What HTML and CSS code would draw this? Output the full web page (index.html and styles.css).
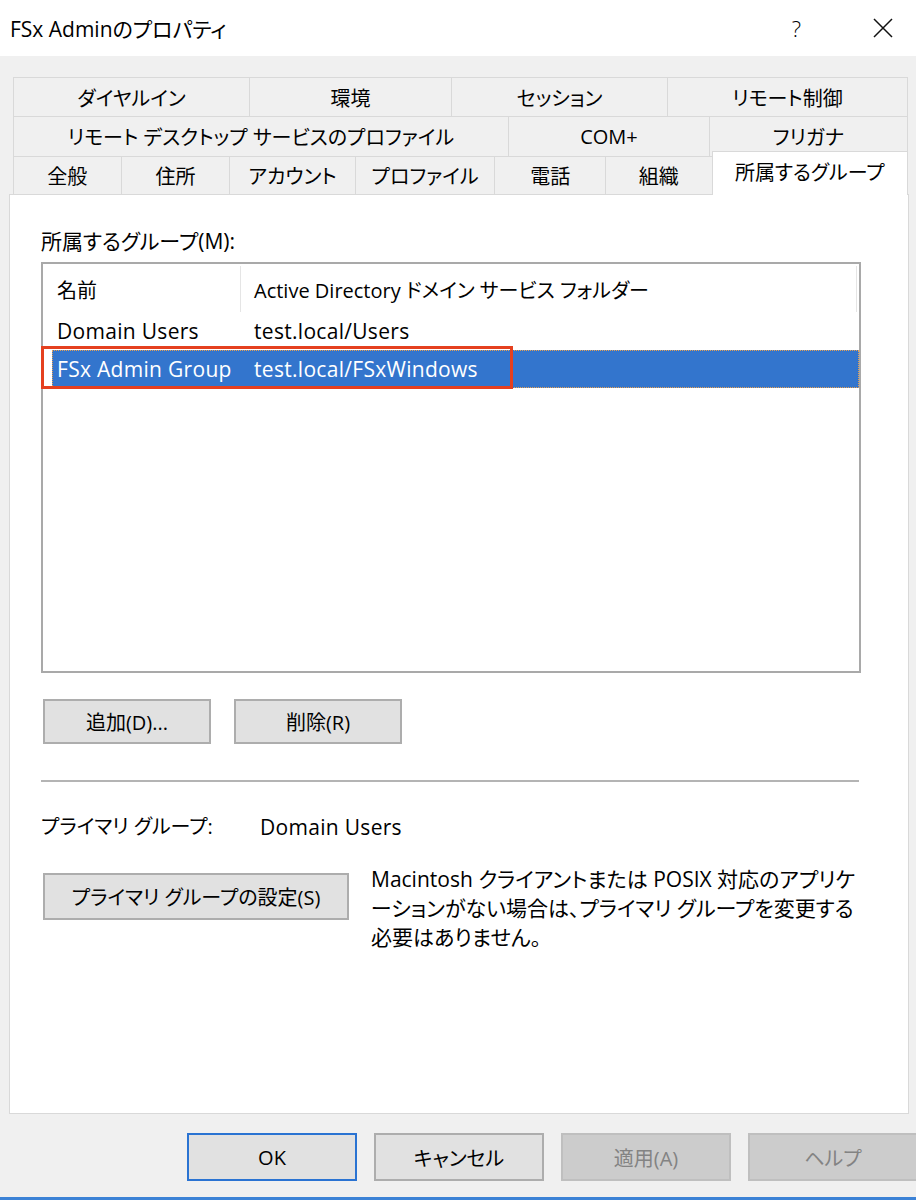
FILE: index.html
```html
<!DOCTYPE html>
<html lang="ja">
<head>
  <meta charset="UTF-8">
  <title>FSx Adminのプロパティ</title>
  <link rel="stylesheet" href="styles.css">
</head>
<body>

  <!-- Barra de título -->
  <div class="titlebar">
    <span class="title">FSx Adminのプロパティ</span>
    <span class="help">?</span>
    <span class="close">
      <svg width="20" height="20" viewBox="0 0 20 20"><path d="M1 1L19 19M19 1L1 19" stroke="#111" stroke-width="1.5" fill="none"/></svg>
    </span>
  </div>

  <!-- Abas em três linhas -->
  <div class="tabs">
    <div class="tab-row row1">
      <div class="tab" style="width:237px">ダイヤルイン</div>
      <div class="tab" style="width:203px">環境</div>
      <div class="tab" style="width:217px">セッション</div>
      <div class="tab" style="width:241px">リモート制御</div>
    </div>
    <div class="tab-row row2">
      <div class="tab" style="width:496px">リモート デスクトップ サービスのプロファイル</div>
      <div class="tab" style="width:202px">COM+</div>
      <div class="tab" style="width:199px">フリガナ</div>
    </div>
    <div class="tab-row row3">
      <div class="tab" style="width:109px">全般</div>
      <div class="tab" style="width:110px">住所</div>
      <div class="tab" style="width:127px">アカウント</div>
      <div class="tab" style="width:141px">プロファイル</div>
      <div class="tab" style="width:112px">電話</div>
      <div class="tab" style="width:108px">組織</div>
      <div class="tab ativa" style="width:197px">所属するグループ</div>
    </div>
  </div>

  <!-- Painel da aba selecionada -->
  <div class="painel">
    <div class="rotulo">所属するグループ(M):</div>

    <div class="lista">
      <div class="linha cabecalho">
        <div class="col1">名前</div>
        <div class="col2">Active Directory ドメイン サービス フォルダー</div>
      </div>
      <div class="linha">
        <div class="col1">Domain Users</div>
        <div class="col2">test.local/Users</div>
      </div>
      <div class="linha selecionada">
        <div class="col1">FSx Admin Group</div>
        <div class="col2">test.local/FSxWindows</div>
        <div class="destaque"></div>
      </div>
    </div>

    <div class="botoes-lista">
      <button class="btn">追加(D)...</button>
      <button class="btn">削除(R)</button>
    </div>

    <div class="separador"></div>

    <div class="primaria">
      <span class="primaria-rotulo">プライマリ グループ:</span>
      <span class="primaria-valor">Domain Users</span>
    </div>

    <div class="primaria-config">
      <button class="btn btn-largo">プライマリ グループの設定(S)</button>
      <p class="aviso">Macintosh クライアントまたは POSIX 対応のアプリケ<br>ーションがない場合は、プライマリ グループを変更する<br>必要はありません。</p>
    </div>
  </div>

  <!-- Botões do rodapé -->
  <div class="rodape">
    <button class="btn btn-rodape padrao">OK</button>
    <button class="btn btn-rodape">キャンセル</button>
    <button class="btn btn-rodape desativado">適用(A)</button>
    <button class="btn btn-rodape desativado">ヘルプ</button>
  </div>
  <div class="borda-janela"></div>

</body>
</html>
```

FILE: styles.css
```css
body {
  font-family: "Open Sans", "Noto Sans CJK JP", sans-serif;
  font-size: 20px;
  font-feature-settings: "palt";
  color: #000;
  background-color: #f0f0f0;
  margin: 0;
  width: 916px;
  height: 1200px;
  overflow: hidden;
}

/* Barra de título branca */
.titlebar {
  height: 56px;
  background: white;
  display: flex;
  align-items: center;
}

.title {
  flex: 1;
  padding-left: 10px;
  font-size: 21px;
}

.help {
  font-size: 22px;
  font-weight: 300;
  margin-right: 72px;
}

.close {
  display: flex;
  margin-right: 23px;
}

/* Abas */
.tabs {
  margin: 21px 8px 0 13px;
}

.tab-row {
  display: flex;
}

.row1 { height: 39px; }
.row2 { height: 40px; }
.row3 { height: 38px; }

.tab {
  box-sizing: border-box;
  display: flex;
  align-items: center;
  justify-content: center;
  border: 1px solid #d9d9d9;
  border-bottom: none;
  margin-left: -1px;
  background: #f0f0f0;
  white-space: nowrap;
}

.tab:first-child {
  margin-left: 0;
}

/* Aba selecionada, mais alta e branca */
.tab.ativa {
  position: relative;
  z-index: 2;
  height: 44px;
  margin-top: -5px;
  padding-bottom: 4px;
  background: white;
}

/* Painel branco */
.painel {
  position: relative;
  box-sizing: border-box;
  height: 920px;
  margin: 0 7px 0 9px;
  padding: 33px 0 0 31px;
  background: white;
  border: 1px solid #d9d9d9;
}

.rotulo {
  font-size: 21px;
  line-height: 26px;
  margin-bottom: 8px;
}

/* Lista de grupos */
.lista {
  box-sizing: border-box;
  width: 820px;
  height: 411px;
  border: 2px solid #a9a9a9;
}

.linha {
  position: relative;
  display: flex;
  height: 38px;
  align-items: center;
  font-size: 21px;
  letter-spacing: 0.3px;
}

.cabecalho {
  height: 48px;
  font-size: 20px;
  letter-spacing: 0;
}

.col1 {
  box-sizing: border-box;
  width: 198px;
  padding-left: 14px;
  white-space: nowrap;
}

.col2 {
  box-sizing: border-box;
  width: 616px;
  padding-left: 13px;
  white-space: nowrap;
}

.cabecalho .col1,
.cabecalho .col2 {
  border-right: 1px solid #e5e5e5;
  height: 46px;
  display: flex;
  align-items: center;
  margin-top: 2px;
}

/* Linha selecionada */
.selecionada {
  margin-left: 9px;
  background: #3375cd;
  color: white;
  outline: 1px dotted #e6a052;
  outline-offset: -1px;
}

.selecionada .col1 {
  width: 189px;
  padding-left: 5px;
}

/* Retângulo vermelho de destaque */
.destaque {
  position: absolute;
  left: -11px;
  top: -4px;
  width: 472px;
  height: 43px;
  border: 3px solid #e5401f;
  box-sizing: border-box;
}

/* Botões */
.btn {
  font-family: inherit;
  font-size: 20px;
  font-feature-settings: "palt";
  color: #000;
  background-color: #e1e1e1;
  border: 2px solid #adadad;
  box-sizing: border-box;
  padding: 0;
  margin: 0;
}

.botoes-lista {
  display: flex;
  gap: 23px;
  margin: 26px 0 0 2px;
}

.botoes-lista .btn {
  width: 168px;
  height: 45px;
}

.separador {
  width: 818px;
  height: 2px;
  background: #b4b4b4;
  margin-top: 36px;
}

.primaria {
  margin-top: 31px;
  line-height: 28px;
  display: flex;
}

.primaria-rotulo {
  width: 219px;
}

.primaria-valor {
  font-size: 21px;
  letter-spacing: 0.3px;
}

.primaria-config {
  display: flex;
  align-items: flex-start;
  margin-top: 32px;
  margin-left: 2px;
}

.btn-largo {
  width: 306px;
  height: 47px;
}

.aviso {
  margin: -8px 0 0 22px;
  font-size: 21px;
  line-height: 29px;
  white-space: nowrap;
}

/* Rodapé com OK, cancelar etc. */
.rodape {
  display: flex;
  gap: 17px;
  height: 83px;
  box-sizing: border-box;
  padding: 19px 0 0 187px;
}

.btn-rodape {
  width: 170px;
  height: 48px;
  flex-shrink: 0;
}

.padrao {
  border-color: #2a73d2;
}

.desativado {
  background-color: #cccccc;
  border-color: #bfbfbf;
  color: #838383;
}

.borda-janela {
  height: 3px;
  background: #3c82d6;
}
```
